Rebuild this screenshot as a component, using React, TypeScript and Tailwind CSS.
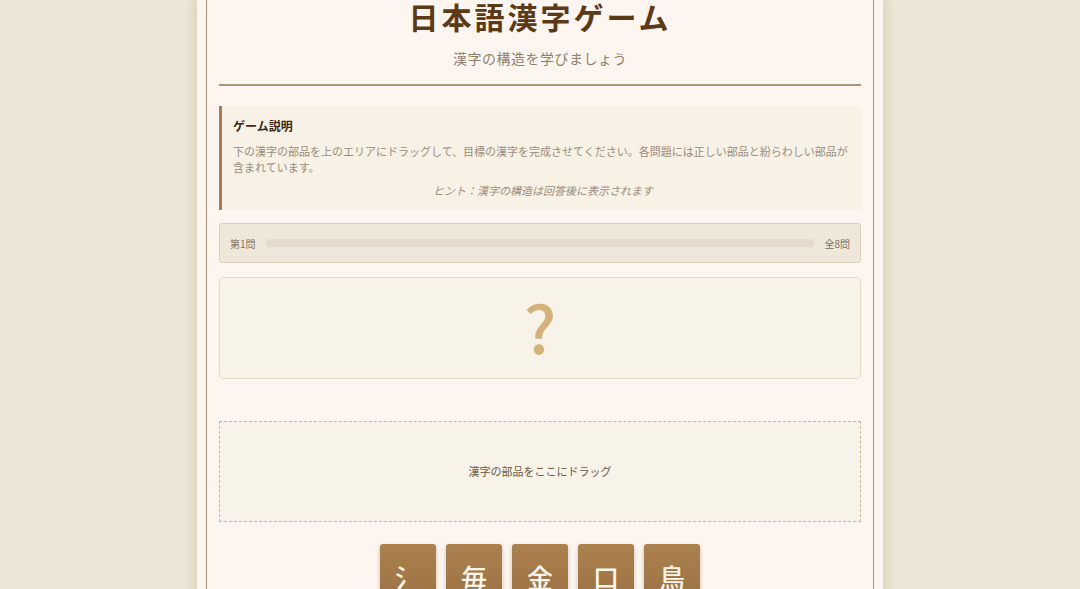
const parts = ["氵", "毎", "金", "口", "鳥"];

export default function App() {
  return (
    <div className="h-[589px] overflow-hidden bg-[#ede6d6] font-['Noto_Sans_CJK_JP','Noto_Sans',sans-serif]">
      <div className="mx-auto w-[686px] bg-[#fdf6f0] px-[9px] shadow-[0_0_14px_rgba(120,90,50,0.22)]">
        <div className="border-x border-[#a89274] px-[12px] pb-10">
          <header className="text-center">
            <h1 className="-mt-[4px] text-[30px] font-bold leading-[40px] tracking-[3px] text-[#5c3a17]">
              日本語漢字ゲーム
            </h1>
            <p className="mt-[12px] text-[14px] leading-[20px] tracking-[0.5px] text-[#8d7e6c]">
              漢字の構造を学びましょう
            </p>
            <div className="mt-[16px] h-[2px] bg-[#ae9470]" />
          </header>

          <section className="mt-[20px] border-l-[3px] border-[#a47d55] bg-[#f7f1e6] pb-[12px] pl-[11px] pr-[8px] pt-[11px]">
            <h2 className="text-[12px] font-bold leading-[18px] text-[#3d2a18]">
              ゲーム説明
            </h2>
            <p className="mt-[8px] text-[11px] leading-[16px] text-[#9c8c7a]">
              下の漢字の部品を上のエリアにドラッグして、目標の漢字を完成させてください。各問題には正しい部品と紛らわしい部品が含まれています。
            </p>
            <p className="mt-[7px] text-center text-[11px] italic leading-[16px] text-[#9c8c7a]">
              ヒント：漢字の構造は回答後に表示されます
            </p>
          </section>

          <div className="mt-[13px] flex h-[40px] items-center gap-[10px] rounded-[3px] border border-[#dcd0b9] bg-[#efe8da] px-[10px] text-[10px] text-[#7d6e5e]">
            <span>第1問</span>
            <div className="h-[8px] flex-1 rounded-full bg-[#e5dacb]" />
            <span>全8問</span>
          </div>

          <div className="mt-[14px] flex h-[102px] items-center justify-center rounded-[4px] border border-[#e6dcc8] bg-[#f8f3e8] pb-[6px]">
            <span className="text-[66px] font-medium leading-none text-[#d4b27c]">
              ?
            </span>
          </div>

          <div className="mt-[42px] flex h-[101px] items-center justify-center border border-dashed border-[#c9b88c] bg-[#f8f3e8] text-[11px] text-[#6b5a48]">
            漢字の部品をここにドラッグ
          </div>

          <div className="mt-[22px] flex justify-center gap-[10px]">
            {parts.map((p) => (
              <div
                key={p}
                className="flex h-[64px] w-[56px] items-center justify-center rounded-[3px] bg-gradient-to-b from-[#ab814f] to-[#9b7043] text-[26px] font-medium text-[#fdf6ec] shadow-[0_2px_4px_rgba(90,60,30,0.3)]"
              >
                {p}
              </div>
            ))}
          </div>
        </div>
      </div>
    </div>
  );
}
